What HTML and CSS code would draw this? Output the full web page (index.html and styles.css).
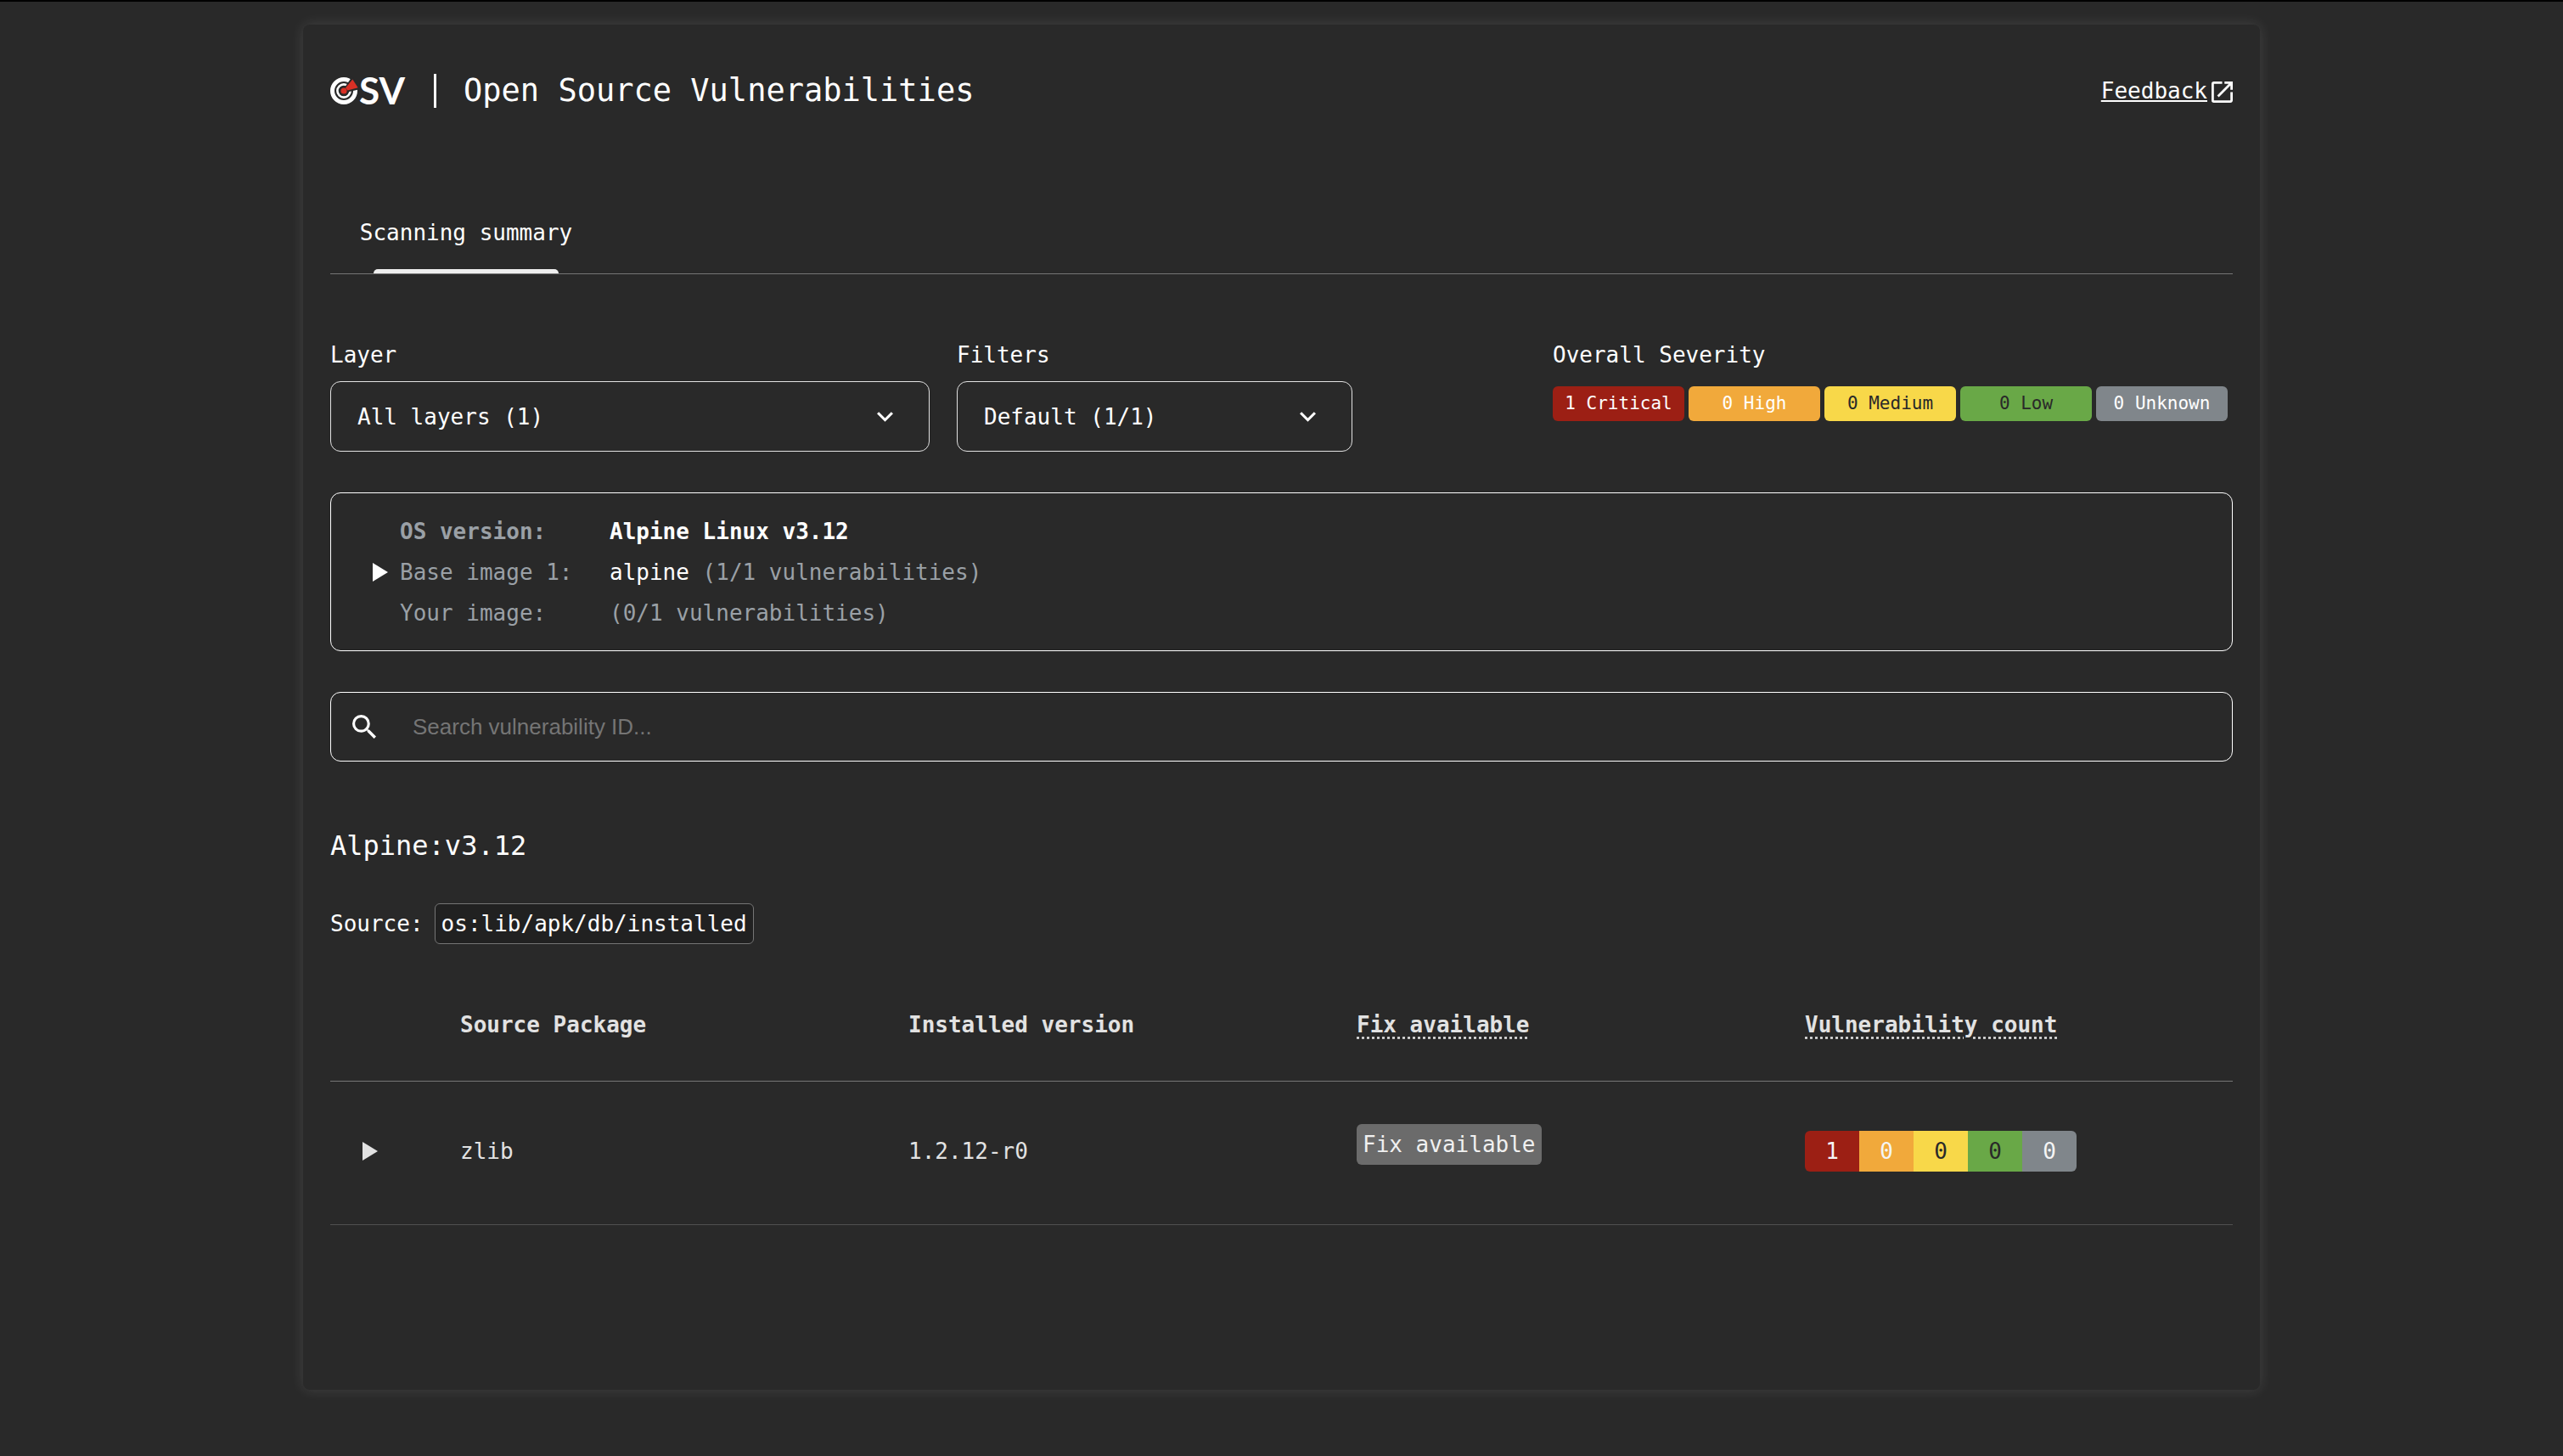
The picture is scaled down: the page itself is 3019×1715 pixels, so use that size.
FILE: index.html
```html
<!DOCTYPE html>
<html lang="en">
<head>
  <meta charset="utf-8">
  <meta name="viewport" content="width=device-width, initial-scale=1">
  <title>Open Source Vulnerabilities</title>
  <link rel="stylesheet" href="styles.css">
</head>
<body>
  <main class="card">
    <header class="header">
      <svg class="logo" viewBox="0 0 92 40" role="img" aria-label="OSV">
        <circle cx="16" cy="20" r="13.5" fill="none" stroke="#fff" stroke-width="5"/>
        <circle cx="16" cy="20" r="7.6" fill="none" stroke="#fff" stroke-width="2.6"/>
        <path d="M18 17 26 5.500 33 17 20 20Z" fill="#292929" stroke="#292929" stroke-width="3"/>
        <path d="M18 16.500 26.300 6.500 32.600 16.300 20.500 19.500Z" fill="#d93025"/>
        <circle cx="16" cy="20" r="3.600" fill="#d93025"/>
        <text class="logo-text" x="34" y="36">SV</text>
      </svg>
      <span class="divider"></span>
      <h1 class="title">Open Source Vulnerabilities</h1>
      <a class="feedback" href="#feedback">
        <span class="feedback-text">Feedback</span>
        <svg class="feedback-icon" viewBox="3 3 18 18" aria-hidden="true">
          <path fill="currentColor" d="M19 19H5V5h7V3H5a2 2 0 0 0-2 2v14a2 2 0 0 0 2 2h14c1.100 0 2-.900 2-2v-7h-2v7zM14 3v2h3.590l-9.830 9.830 1.410 1.410L19 6.410V10h2V3h-7z"/>
        </svg>
      </a>
    </header>

    <nav class="tabs">
      <button class="tab" type="button">Scanning summary</button>
    </nav>

    <section class="controls">
      <div class="field field-layer">
        <label class="label" for="layer">Layer</label>
        <div class="select-box">
          <select class="select" id="layer"><option>All layers (1)</option></select>
          <svg class="chevron" viewBox="6 8.590 12 7.410" aria-hidden="true"><path fill="currentColor" d="M16.590 8.590 12 13.170 7.410 8.590 6 10l6 6 6-6z"/></svg>
        </div>
      </div>
      <div class="field field-filter">
        <label class="label" for="filter">Filters</label>
        <div class="select-box">
          <select class="select" id="filter"><option>Default (1/1)</option></select>
          <svg class="chevron" viewBox="6 8.590 12 7.410" aria-hidden="true"><path fill="currentColor" d="M16.590 8.590 12 13.170 7.410 8.590 6 10l6 6 6-6z"/></svg>
        </div>
      </div>
      <div class="severity">
        <div class="label">Overall Severity</div>
        <div class="badges">
          <span class="badge critical">1 Critical</span>
          <span class="badge high">0 High</span>
          <span class="badge medium">0 Medium</span>
          <span class="badge low">0 Low</span>
          <span class="badge unknown">0 Unknown</span>
        </div>
      </div>
    </section>

    <section class="image-info">
      <div class="info-row os-row">
        <span class="info-label">OS version:</span>
        <span class="info-value">Alpine Linux v3.12</span>
      </div>
      <details>
        <summary class="info-row">
          <svg class="triangle" viewBox="0 0 18 22" aria-hidden="true"><path fill="currentColor" d="M0 0 18 11 0 22z"/></svg>
          <span class="info-label">Base image 1:</span>
          <span><span class="info-value">alpine</span> (1/1 vulnerabilities)</span>
        </summary>
      </details>
      <div class="info-row">
        <span class="info-label">Your image:</span>
        <span>(0/1 vulnerabilities)</span>
      </div>
    </section>

    <label class="search">
      <svg class="search-icon" viewBox="3 3 17.490 17.490" aria-hidden="true"><path fill="currentColor" d="M15.500 14h-.790l-.280-.270A6.471 6.471 0 0 0 16 9.500 6.500 6.500 0 1 0 9.500 16c1.610 0 3.090-.590 4.230-1.570l.270.280v.790l5 4.990L20.490 19l-4.990-5zm-6 0C7.010 14 5 11.990 5 9.500S7.010 5 9.500 5 14 7.010 14 9.500 11.990 14 9.500 14z"/></svg>
      <input class="search-input" type="text" placeholder="Search vulnerability ID..." aria-label="Search vulnerability ID">
    </label>

    <h2 class="ecosystem">Alpine:v3.12</h2>
    <p class="source">Source: <code class="source-path">os:lib/apk/db/installed</code></p>

    <table class="packages">
      <colgroup>
        <col class="col-toggle"><col class="col-data"><col class="col-data"><col class="col-data"><col>
      </colgroup>
      <thead>
        <tr>
          <th></th>
          <th>Source Package</th>
          <th>Installed version</th>
          <th><span class="hint">Fix available</span></th>
          <th><span class="hint">Vulnerability count</span></th>
        </tr>
      </thead>
      <tbody>
        <tr>
          <td>
            <button class="toggle" type="button" aria-label="Expand zlib">
              <svg class="triangle" viewBox="0 0 18 22" aria-hidden="true"><path fill="currentColor" d="M0 0 18 11 0 22z"/></svg>
            </button>
          </td>
          <td>zlib</td>
          <td>1.2.12-r0</td>
          <td class="fix-cell"><span class="fix">Fix available</span></td>
          <td>
            <div class="counts">
              <span class="count critical">1</span>
              <span class="count high">0</span>
              <span class="count medium">0</span>
              <span class="count low">0</span>
              <span class="count unknown">0</span>
            </div>
          </td>
        </tr>
      </tbody>
    </table>
  </main>
</body>
</html>
```
FILE: styles.css
```css
* {
  box-sizing: border-box;
}

body {
  margin: 0;
  border-top: 2px solid #000;
  background: #292929;
  color: #fff;
  font: 26px/32px "DejaVu Sans Mono", monospace;
}

button,
select {
  border: 0;
  background: none;
  color: inherit;
  font: inherit;
}

svg {
  display: block;
  flex: none;
}

.card {
  max-width: 2305px;
  margin: 27px auto 79px;
  padding: 58px 32px 194px;
  border-radius: 8px;
  box-shadow: 0 0 16px rgba(255, 255, 255, 0.12);
  background: #292929;
}

/* Header */

.header {
  display: flex;
  align-items: center;
}

.logo {
  width: 92px;
  height: 40px;
  overflow: visible;
}

.logo-text {
  fill: #fff;
  font: 700 44px Lato, sans-serif;
}

.divider {
  width: 3px;
  height: 40px;
  margin: 0 32px 0 30px;
  background: #fff;
}

.title {
  margin: 0;
  font-size: 37px;
  font-weight: 400;
  line-height: 40px;
}

.feedback {
  display: flex;
  align-items: center;
  gap: 5px;
  margin-left: auto;
  color: inherit;
  text-decoration: none;
}

.feedback-text {
  text-decoration: underline;
}

.feedback-icon {
  width: 25px;
  height: 25px;
  margin-top: 3px;
}

/* Tabs */

.tabs {
  margin-top: 99px;
  border-bottom: 1px solid #757575;
}

.tab {
  position: relative;
  display: block;
  width: 320px;
  height: 96px;
  padding: 0;
}

.tab::after {
  content: "";
  position: absolute;
  right: 51px;
  bottom: 0;
  left: 51px;
  height: 5px;
  border-radius: 5px 5px 0 0;
  background: #eee;
}

/* Layer, filter and severity */

.controls {
  display: flex;
  gap: 32px;
  margin-top: 79px;
}

.label {
  display: block;
}

.field-layer {
  flex: 0 1 706px;
}

.field-filter {
  flex: 0 1 466px;
}

.select-box {
  display: grid;
  align-items: center;
  margin-top: 15px;
}

.select {
  grid-area: 1 / 1;
  width: 100%;
  height: 83px;
  padding: 0 31px;
  border: 1px solid #e2e2e2;
  border-radius: 12px;
  appearance: none;
}

.chevron {
  grid-area: 1 / 1;
  justify-self: end;
  width: 19px;
  height: 12px;
  margin-right: 43px;
  pointer-events: none;
}

.severity {
  flex: 0 0 801px;
  margin-left: auto;
}

.badges {
  display: flex;
  gap: 5px;
  margin-top: 21px;
}

.badge {
  width: 155px;
  border-radius: 6px;
  font-size: 21px;
  line-height: 41px;
  text-align: center;
}

.critical {
  background: #9c1f14;
}

.high {
  background: #f1a93b;
}

.medium {
  background: #f8d849;
}

.low {
  background: #69a847;
}

.unknown {
  background: #80868b;
}

/* Image details */

.image-info {
  margin-top: 48px;
  padding: 21px 30px 20px;
  border: 1px solid #fff;
  border-radius: 12px;
  color: #9aa0a6;
}

.info-row {
  display: grid;
  grid-template-columns: 51px 247px 1fr;
  align-items: center;
  line-height: 48px;
  list-style: none;
}

.info-label {
  grid-column: 2;
}

.info-value {
  color: #fff;
}

.os-row {
  font-weight: 700;
}

.triangle {
  width: 18px;
  height: 22px;
}

.image-info .triangle {
  margin-left: 19px;
  color: #fff;
}

/* Search */

.search {
  display: flex;
  align-items: center;
  gap: 43px;
  height: 82px;
  margin-top: 48px;
  padding: 0 25px;
  border: 1px solid #fff;
  border-radius: 12px;
}

.search-icon {
  width: 28px;
  height: 28px;
}

.search-input {
  flex: 1;
  padding: 0;
  border: 0;
  outline: 0;
  background: none;
  color: #fff;
  font: 26px/32px "Liberation Sans", Arial, sans-serif;
}

.search-input::placeholder {
  color: #757575;
}

/* Package list */

.ecosystem {
  margin: 79px 0 48px;
  font-size: 32px;
  font-weight: 400;
  line-height: 40px;
}

.source {
  display: flex;
  align-items: center;
  gap: 13px;
  margin: 0;
}

.source-path {
  padding: 0 7px;
  border: 1px solid #757575;
  border-radius: 6px;
  background: #212121;
  font: inherit;
  line-height: 46px;
}

.packages {
  width: 100%;
  margin-top: 29px;
  border-collapse: collapse;
  table-layout: fixed;
  color: #e2e2e2;
}

.col-toggle {
  width: 153px;
}

.col-data {
  width: 528px;
}

.packages th,
.packages td {
  padding: 0;
  text-align: left;
}

.packages th {
  height: 132px;
  border-bottom: 1px solid #757575;
}

.packages td {
  height: 169px;
  padding-bottom: 3px;
  border-bottom: 1px solid #505050;
}

.hint {
  text-decoration: underline dotted;
  text-underline-offset: 5px;
}

.toggle {
  display: block;
  padding: 0 38px;
}

.packages .fix-cell {
  padding-bottom: 19px;
}

.fix {
  display: inline-block;
  padding: 0 7px;
  border-radius: 6px;
  background: #6b6b6b;
  color: #f0f0f0;
  line-height: 48px;
}

.counts {
  display: flex;
  width: 320px;
  border-radius: 6px;
  overflow: hidden;
  color: #f5f5f5;
}

.count {
  flex: 1;
  line-height: 48px;
  text-align: center;
}

.medium,
.low {
  color: #292929;
}
```
